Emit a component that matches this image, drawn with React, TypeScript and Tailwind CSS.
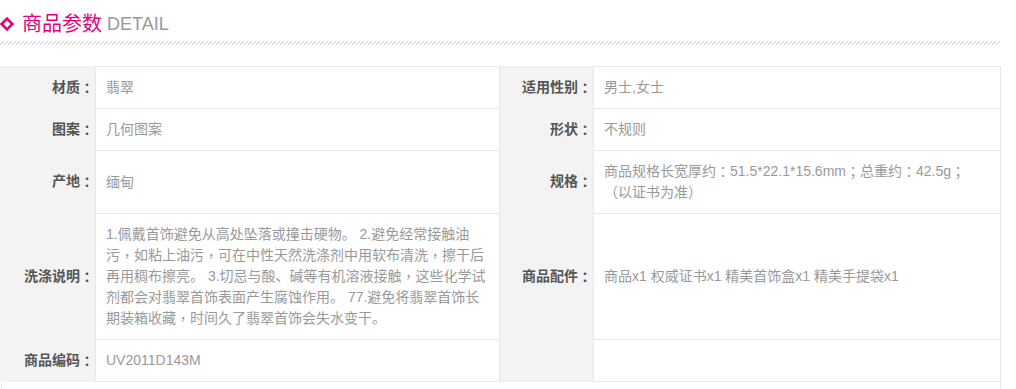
const font = { fontFamily: '"Liberation Sans", "Noto Sans CJK SC", sans-serif' };
const tc = { fontFamily: '"Noto Sans CJK TC", sans-serif' };

// centred full-width punctuation, as in the reference
const P = ({ t }: { t: string }) => (
  <>
    {t.split(/([，：；])/).map((s, i) =>
      /[，：；]/.test(s) ? (
        <span key={i} style={tc} className="inline-block align-top leading-[21px]">
          {s}
        </span>
      ) : (
        <span key={i}>{s}</span>
      )
    )}
  </>
);

const Label = ({ t }: { t: string }) => (
  <div className="flex items-center justify-end bg-[#f3f3f3] pr-[1px] text-[14px] leading-[21px] font-bold text-[#555]">
    <div>
      <P t={t} />
    </div>
  </div>
);

const Value = ({ children, last }: { children?: React.ReactNode; last?: boolean }) => (
  <div
    className={
      "flex items-center border-t border-l border-r border-[#e8e8e8] px-[10px] py-[10px] text-[14px] leading-[21px] text-[#999] " +
      (last ? "border-b" : "")
    }
  >
    <div>{children}</div>
  </div>
);

const App = () => {
  return (
    <div className="w-[1016px] h-[389px] overflow-hidden bg-white" style={font}>
      <div className="flex items-center h-[26px] mt-[11px]">
        <svg width="14" height="14" viewBox="0 0 14 14">
          <path d="M7 1.6 L12.4 7 L7 12.4 L1.6 7 Z" fill="none" stroke="#e5007e" strokeWidth="2.6" />
        </svg>
        <span className="ml-[8px] text-[20px] leading-[26px] text-[#e5007e]">商品参数</span>
        <span className="ml-[5px] text-[18px] leading-[26px] text-[#999]">DETAIL</span>
      </div>
      <svg width="1000" height="4" className="mt-[4px] block">
        <defs>
          <pattern id="hatch" width="4" height="4" patternUnits="userSpaceOnUse">
            <path d="M0 4 L4 0" stroke="#c8c8c8" strokeWidth="1" />
          </pattern>
        </defs>
        <rect width="1000" height="4" fill="url(#hatch)" />
      </svg>
      <div className="mt-[21px] grid w-[1001px] grid-cols-[95px_405px_93px_408px]">
        <Label t="材质：" />
        <Value>翡翠</Value>
        <Label t="适用性别：" />
        <Value>男士,女士</Value>

        <Label t="图案：" />
        <Value>几何图案</Value>
        <Label t="形状：" />
        <Value>不规则</Value>

        <Label t="产地：" />
        <Value>缅甸</Value>
        <Label t="规格：" />
        <Value>
          <P t="商品规格长宽厚约：51.5*22.1*15.6mm；总重约：42.5g；" />
          <br />
          （以证书为准）
        </Value>

        <Label t="洗涤说明：" />
        <Value>
          1.佩戴首饰避免从高处坠落或撞击硬物。 2.避免经常接触油
          <br />
          <P t="污，如粘上油污，可在中性天然洗涤剂中用软布清洗，擦干后" />
          <br />
          <P t="再用稠布擦亮。 3.切忌与酸、碱等有机溶液接触，这些化学试" />
          <br />
          剂都会对翡翠首饰表面产生腐蚀作用。 77.避免将翡翠首饰长
          <br />
          <P t="期装箱收藏，时间久了翡翠首饰会失水变干。" />
        </Value>
        <Label t="商品配件：" />
        <Value>商品x1 权威证书x1 精美首饰盒x1 精美手提袋x1</Value>

        <Label t="商品编码：" />
        <Value last>UV2011D143M</Value>
        <Label t="" />
        <Value last>{"\u00a0"}</Value>
      </div>
      <div className="ml-[1px] h-[30px] w-[1000px] border-x border-[#e8e8e8]" />
    </div>
  );
};

export default App;
